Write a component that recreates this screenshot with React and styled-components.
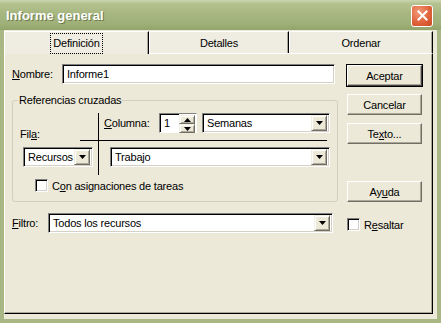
import React from "react";
import styled, { createGlobalStyle } from "styled-components";

const Global = createGlobalStyle`
  html, body { margin: 0; padding: 0; background: #ECE9D8; }
  body { font-family: "Liberation Sans", Arial, sans-serif; font-size: 11px; letter-spacing: -0.2px; color: #000; }
`;

const Window = styled.div`
  width: 441px;
  height: 323px;
  display: flex;
  flex-direction: column;
  background: #A9B784;
  box-sizing: border-box;
`;

const TitleBar = styled.div`
  height: 30px;
  flex: none;
  display: flex;
  align-items: center;
  justify-content: space-between;
  padding: 0 8px 0 6px;
  background: linear-gradient(to bottom, #CDD6B0 0%, #B5C290 12%, #A7B781 45%, #9EAF77 80%, #93A46B 100%);
`;

const Title = styled.span`
  font-family: "Liberation Sans", Arial, sans-serif;
  font-weight: bold;
  font-size: 13px;
  letter-spacing: 0;
  color: #fff;
  text-shadow: 1px 1px 0 #6D7C4B;
  margin-top: 1px;
`;

const CloseBtn = styled.div`
  width: 20px;
  height: 20px;
  border: 1px solid #fff;
  border-radius: 3px;
  background: radial-gradient(circle at 35% 30%, #F29C7B 0%, #E0643C 55%, #C94A22 100%);
  display: flex;
  align-items: center;
  justify-content: center;
  margin-top: 1px;
`;

const Client = styled.div`
  flex: 1;
  margin: 0 4px 4px 4px;
  background: #ECE9D8;
  display: flex;
  flex-direction: column;
  padding: 1px 4px 5px 0;
`;

const TabStrip = styled.div`
  display: flex;
  height: 22px;
  flex: none;
  position: relative;
  z-index: 1;
`;

const Tab = styled.div`
  width: ${(p) => p.$w}px;
  box-sizing: border-box;
  display: flex;
  align-items: center;
  justify-content: center;
  background: #EFEDE2;
  border-top: 1px solid #fff;
  border-left: 1px solid #fff;
  border-right: 1px solid #000;
  box-shadow: inset -1px 0 0 #ACA899;
  margin-bottom: ${(p) => (p.$active ? "-1px" : "0")};
  height: ${(p) => (p.$active ? "23px" : "22px")};
  padding-top: 1px;
`;

const Focus = styled.span`
  outline: 1px dotted #000;
  outline-offset: 0;
  padding: 3px 2px 4px 2px;
`;

const Panel = styled.div`
  flex: 1;
  border-top: 1px solid #fff;
  border-left: 1px solid #fff;
  border-right: 1px solid #000;
  border-bottom: 1px solid #000;
  box-shadow: inset -1px -1px 0 #ACA899;
  display: flex;
  gap: 8px;
  padding: 10px 0 0 7px;
`;

const LeftCol = styled.div`
  width: 326px;
  display: flex;
  flex-direction: column;
`;

const RightCol = styled.div`
  width: 75px;
  display: flex;
  flex-direction: column;
  padding-top: 1px;
  margin-left: 1px;
`;

const Row = styled.div`
  display: flex;
  align-items: center;
  height: 20px;
  margin-top: ${(p) => p.$mt || 0}px;
`;

const Label = styled.span`
  width: ${(p) => (p.$w ? p.$w + "px" : "auto")};
  flex: none;
  white-space: nowrap;
`;

const U = styled.span`
  text-decoration: underline;
`;

const Sunken = styled.div`
  box-sizing: border-box;
  width: ${(p) => p.$w}px;
  height: 20px;
  background: #fff;
  border-top: 1px solid #808080;
  border-left: 1px solid #808080;
  border-right: 1px solid #fff;
  border-bottom: 1px solid #fff;
  box-shadow: inset 1px 1px 0 #000, inset -1px -1px 0 #D4D0C8;
  display: flex;
  align-items: center;
  padding-left: 4px;
  flex: none;
  white-space: nowrap;
  overflow: hidden;
`;

const ComboBox = styled(Sunken)`
  justify-content: space-between;
  padding-right: 2px;
`;

const ArrowBtn = styled.div`
  width: 16px;
  height: 16px;
  box-sizing: border-box;
  flex: none;
  background: #ECE9D8;
  border-top: 1px solid #F1EFE2;
  border-left: 1px solid #F1EFE2;
  border-right: 1px solid #716F64;
  border-bottom: 1px solid #716F64;
  box-shadow: inset 1px 1px 0 #fff, inset -1px -1px 0 #ACA899;
  display: flex;
  align-items: center;
  justify-content: center;
`;

const Tri = ({ up }) => (
  <svg width="7" height="4" viewBox="0 0 7 4">
    <path d={up ? "M3.5 0 L7 4 L0 4 Z" : "M0 0 H7 L3.5 4 Z"} fill="#000" />
  </svg>
);

const Combo = ({ w, children }) => (
  <ComboBox $w={w}>
    <span>{children}</span>
    <ArrowBtn>
      <Tri />
    </ArrowBtn>
  </ComboBox>
);

const SpinWrap = styled.div`
  display: flex;
  align-items: stretch;
  height: 20px;
  flex: none;
`;

const SpinInput = styled(Sunken)`
  border-right: none;
  box-shadow: inset 1px 1px 0 #000;
  padding-left: 4px;
`;

const SpinBtns = styled.div`
  width: 18px;
  display: flex;
  flex-direction: column;
  background: #fff;
  border-top: 1px solid #808080;
  border-bottom: 1px solid #fff;
  border-right: 1px solid #fff;
  box-sizing: border-box;
  padding: 1px 1px 0 0;
`;

const SpinBtn = styled(ArrowBtn)`
  width: 16px;
  height: 9px;
`;

const GroupBox = styled.fieldset`
  margin: 10px 0 0 0;
  padding: 0 0 9px 0;
  width: 326px;
  box-sizing: border-box;
  border: 1px solid #D0D0BF;
  border-radius: 3px;
  min-width: 0;
`;

const Legend = styled.legend`
  padding: 0 1px;
  margin-left: 5px;
  font-size: 11px;
  line-height: 13px;
`;

const Cross = styled.div`
  position: relative;
  display: grid;
  grid-template-columns: 86px 1fr;
  grid-template-rows: 27px 35px;
  margin-top: 6px;

  &::before {
    content: "";
    position: absolute;
    left: 85px;
    top: 0;
    bottom: 0;
    width: 1px;
    background: #000;
  }
  &::after {
    content: "";
    position: absolute;
    top: 27px;
    left: 67px;
    width: 247px;
    height: 1px;
    background: #000;
  }
`;

const Cell = styled.div`
  display: flex;
  align-items: ${(p) => (p.$bottom ? "flex-end" : "flex-start")};
  padding-left: ${(p) => p.$pl || 0}px;
  padding-top: ${(p) => p.$pt || 0}px;
  box-sizing: border-box;
`;

const CheckRow = styled.label`
  display: flex;
  align-items: center;
  gap: 4px;
  margin-left: ${(p) => p.$ml || 0}px;
  margin-top: ${(p) => p.$mt || 0}px;
  height: 13px;
  white-space: nowrap;
`;

const CheckBox = styled.span`
  width: 13px;
  height: 13px;
  box-sizing: border-box;
  background: #fff;
  border-top: 1px solid #808080;
  border-left: 1px solid #808080;
  border-right: 1px solid #fff;
  border-bottom: 1px solid #fff;
  box-shadow: inset 1px 1px 0 #000, inset -1px -1px 0 #D4D0C8;
  flex: none;
`;

const Gap = styled.span`
  width: ${(p) => p.$w}px;
  flex: none;
`;

const Button = styled.div`
  height: 21px;
  box-sizing: border-box;
  display: flex;
  align-items: center;
  justify-content: center;
  background: #ECE9D8;
  border-top: 1px solid #fff;
  border-left: 1px solid #fff;
  border-right: 1px solid #716F64;
  border-bottom: 1px solid #716F64;
  box-shadow: inset -1px -1px 0 #ACA899;
  margin-top: ${(p) => p.$mt || 0}px;
  ${(p) =>
    p.$default &&
    `
    outline: 1px solid #000;
    outline-offset: 0;
    border-right-color: #404040;
    border-bottom-color: #404040;
  `}
`;

export default function App() {
  return (
    <>
      <Global />
      <Window>
        <TitleBar>
          <Title>Informe general</Title>
          <CloseBtn>
            <svg width="11" height="11" viewBox="0 0 11 11">
              <path d="M1.5 1.5 L9.5 9.5 M9.5 1.5 L1.5 9.5" stroke="#fff" strokeWidth="2" strokeLinecap="square" />
            </svg>
          </CloseBtn>
        </TitleBar>
        <Client>
          <TabStrip>
            <Tab $w={145} $active>
              <Focus>Definición</Focus>
            </Tab>
            <Tab $w={140}>Detalles</Tab>
            <Tab $w={144}>Ordenar</Tab>
          </TabStrip>
          <Panel>
            <LeftCol>
              <Row>
                <Label $w={50}>
                  <U>N</U>ombre:
                </Label>
                <Sunken $w={273}>Informe1</Sunken>
              </Row>
              <GroupBox>
                <Legend>Referencias cruzadas</Legend>
                <Cross>
                  <Cell $bottom $pl={7}>
                    <Label>
                      Fil<U>a</U>:
                    </Label>
                  </Cell>
                  <Cell $pl={5}>
                    <Row>
                      <Label $w={55}>
                        <U>C</U>olumna:
                      </Label>
                      <SpinWrap>
                        <SpinInput $w={20}>1</SpinInput>
                        <SpinBtns>
                          <SpinBtn>
                            <Tri up />
                          </SpinBtn>
                          <SpinBtn>
                            <Tri />
                          </SpinBtn>
                        </SpinBtns>
                      </SpinWrap>
                      <Gap $w={5} />
                      <Combo w={128}>Semanas</Combo>
                    </Row>
                  </Cell>
                  <Cell $pl={10} $pt={7}>
                    <Combo w={70}>Recursos</Combo>
                  </Cell>
                  <Cell $pl={11} $pt={7}>
                    <Combo w={220}>Trabajo</Combo>
                  </Cell>
                </Cross>
                <CheckRow $ml={22} $mt={4}>
                  <CheckBox />
                  <span>
                    C<U>o</U>n asignaciones de tareas
                  </span>
                </CheckRow>
              </GroupBox>
              <Row $mt={11}>
                <Label $w={36}>
                  <U>F</U>iltro:
                </Label>
                <Combo w={285}>Todos los recursos</Combo>
              </Row>
            </LeftCol>
            <RightCol>
              <Button $default>Aceptar</Button>
              <Button $mt={8}>Cancelar</Button>
              <Button $mt={8}>
                Te<U>x</U>to...
              </Button>
              <Button $mt={37}>
                Ay<U>u</U>da
              </Button>
              <CheckRow $mt={16}>
                <CheckBox />
                <span>
                  R<U>e</U>saltar
                </span>
              </CheckRow>
            </RightCol>
          </Panel>
        </Client>
      </Window>
    </>
  );
}
